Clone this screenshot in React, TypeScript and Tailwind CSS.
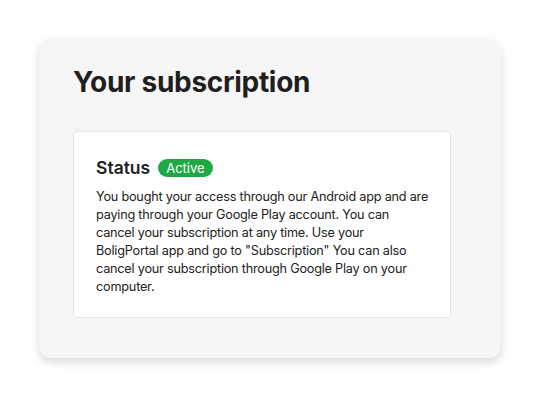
const LINES = [
  "You bought your access through our Android app and are",
  "paying through your Google Play account. You can",
  "cancel your subscription at any time. Use your",
  'BoligPortal app and go to "Subscription" You can also',
  "cancel your subscription through Google Play on your",
  "computer.",
];

export default function App() {
  return (
    <div className="min-h-screen bg-white pt-[39px] pl-[39px] font-['Inter',_sans-serif] text-[#1f1f1f]">
      <div className="w-[462px] rounded-xl bg-[#f6f6f6] px-[34px] pt-[25px] pb-[40px] shadow-[0_4px_10px_rgba(0,0,0,0.15)]">
        <h1 className="text-[28px] font-bold leading-[36px] tracking-[-0.3px]">Your subscription</h1>
        <div className="mt-[31px] w-[378px] rounded border border-[#e6e6e6] bg-white pl-[22px] pr-[8px] pt-[25px] pb-[21px]">
          <div className="flex items-center gap-[8px]">
            <span className="text-[17.5px] font-semibold leading-[22px]">Status</span>
            <span className="rounded-full bg-[#1fa843] px-[8px] text-[13px] font-normal leading-[18px] text-white">Active</span>
          </div>
          <p className="mt-[9px] whitespace-nowrap text-[12.7px] leading-[18px] tracking-[-0.22px] text-[#222]">
            {LINES.map((line, i) => (
              <span key={i} className="block">{line}</span>
            ))}
          </p>
        </div>
      </div>
    </div>
  );
}
